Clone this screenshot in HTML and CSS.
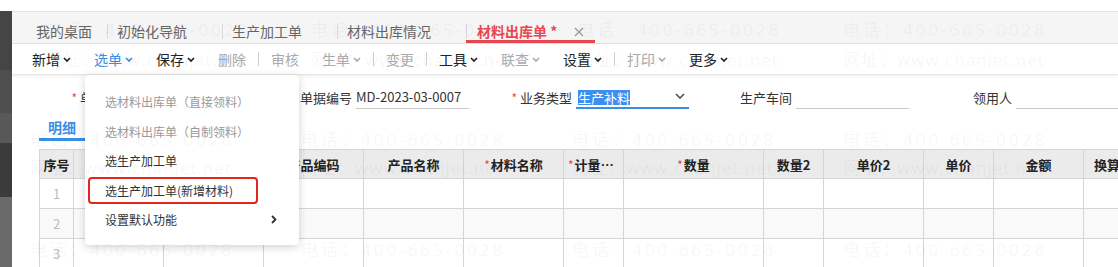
FILE: index.html
```html
<!DOCTYPE html>
<html lang="zh-CN">
<head>
<meta charset="UTF-8">
<title>材料出库单</title>
<link rel="stylesheet" href="styles.css">
</head>
<body>
<div class="app">
    <div class="side"></div>
    <div class="main">
        <div class="tabbar">
            <div class="tab first">我的桌面</div>
            <div class="tab">初始化导航</div>
            <div class="tab">生产加工单</div>
            <div class="tab">材料出库情况</div>
            <div class="tab active">材料出库单 *<svg class="close" width="10" height="10" viewBox="0 0 10 10"><path d="M1 1L9 9M9 1L1 9" stroke="#999" stroke-width="1.3" fill="none"/></svg></div>
        </div>

        <div class="toolbar">
            <span class="tool">新增<svg width="8" height="5" viewBox="0 0 8 5"><path d="M1 1l3 3 3-3" stroke="currentColor" stroke-width="1.7" fill="none"/></svg></span>
            <span class="tool blue has-menu">选单<svg width="8" height="5" viewBox="0 0 8 5"><path d="M1 1l3 3 3-3" stroke="currentColor" stroke-width="1.7" fill="none"/></svg>
                <div class="menu">
                    <div class="menu-item off">选材料出库单（直接领料）</div>
                    <div class="menu-item off">选材料出库单（自制领料）</div>
                    <div class="menu-item">选生产加工单</div>
                    <div class="menu-item"><span class="marked">选生产加工单(新增材料)</span></div>
                    <div class="menu-item sub">设置默认功能<svg width="6" height="9" viewBox="0 0 6 9"><path d="M1 1l3.5 3.5L1 8" stroke="#333" stroke-width="1.8" fill="none"/></svg></div>
                </div>
            </span>
            <span class="tool">保存<svg width="8" height="5" viewBox="0 0 8 5"><path d="M1 1l3 3 3-3" stroke="currentColor" stroke-width="1.7" fill="none"/></svg></span>
            <span class="tool off">删除</span>
            <span class="sep"></span>
            <span class="tool off">审核</span>
            <span class="tool off">生单<svg width="8" height="5" viewBox="0 0 8 5"><path d="M1 1l3 3 3-3" stroke="currentColor" stroke-width="1.7" fill="none"/></svg></span>
            <span class="sep"></span>
            <span class="tool off">变更</span>
            <span class="sep"></span>
            <span class="tool">工具<svg width="8" height="5" viewBox="0 0 8 5"><path d="M1 1l3 3 3-3" stroke="currentColor" stroke-width="1.7" fill="none"/></svg></span>
            <span class="tool off">联查<svg width="8" height="5" viewBox="0 0 8 5"><path d="M1 1l3 3 3-3" stroke="currentColor" stroke-width="1.7" fill="none"/></svg></span>
            <span class="tool">设置<svg width="8" height="5" viewBox="0 0 8 5"><path d="M1 1l3 3 3-3" stroke="currentColor" stroke-width="1.7" fill="none"/></svg></span>
            <span class="sep"></span>
            <span class="tool off">打印<svg width="8" height="5" viewBox="0 0 8 5"><path d="M1 1l3 3 3-3" stroke="currentColor" stroke-width="1.7" fill="none"/></svg></span>
            <span class="tool">更多<svg width="8" height="5" viewBox="0 0 8 5"><path d="M1 1l3 3 3-3" stroke="currentColor" stroke-width="1.7" fill="none"/></svg></span>
        </div>

        <div class="content">
            <div class="form-row">
                <div class="field">
                    <label><span class="req">*</span>单据日期</label>
                    <div class="input">2023-03-15</div>
                </div>
                <div class="field">
                    <label>单据编号</label>
                    <div class="input">MD-2023-03-0007</div>
                </div>
                <div class="field">
                    <label><span class="req">*</span>业务类型</label>
                    <div class="input select"><span class="picked">生产补料</span><svg width="10" height="6" viewBox="0 0 10 6"><path d="M1 1l4 4 4-4" stroke="#555" stroke-width="1.7" fill="none"/></svg></div>
                </div>
                <div class="field">
                    <label>生产车间</label>
                    <div class="input"></div>
                </div>
                <div class="field">
                    <label>领用人</label>
                    <div class="input"></div>
                </div>
            </div>

            <div class="subtabs">
                <span class="subtab">明细</span>
            </div>

            <div class="grid-wrap">
                <table class="grid">
                    <colgroup>
                        <col style="width:34px"><col style="width:90px"><col style="width:100px">
                        <col style="width:100px"><col style="width:100px"><col style="width:100px">
                        <col style="width:60px"><col style="width:140px"><col style="width:60px">
                        <col style="width:100px"><col style="width:70px"><col style="width:90px">
                        <col style="width:60px">
                    </colgroup>
                    <thead>
                        <tr>
                            <th class="num">序号</th>
                            <th>源单编号</th>
                            <th>源单行号</th>
                            <th>产品编码</th>
                            <th>产品名称</th>
                            <th><span class="req">*</span>材料名称</th>
                            <th><span class="req">*</span>计量单位</th>
                            <th><span class="req">*</span>数量</th>
                            <th>数量2</th>
                            <th>单价2</th>
                            <th>单价</th>
                            <th>金额</th>
                            <th>换算率</th>
                        </tr>
                    </thead>
                    <tbody>
                        <tr><td class="num">1</td><td></td><td></td><td></td><td></td><td></td><td></td><td></td><td></td><td></td><td></td><td></td><td></td></tr>
                        <tr class="odd"><td class="num">2</td><td></td><td></td><td></td><td></td><td></td><td></td><td></td><td></td><td></td><td></td><td></td><td></td></tr>
                        <tr><td class="num">3</td><td></td><td></td><td></td><td></td><td></td><td></td><td></td><td></td><td></td><td></td><td></td><td></td></tr>
                    </tbody>
                </table>
            </div>
        </div>
    </div>
</div>

<!-- watermark of the host app, drawn over everything -->
<div class="wm wm-head">
    <div class="wm-cell"><p class="tel">电话：400-665-0028</p><p class="web">网址：www.chanjet.net</p></div>
    <div class="wm-cell"><p class="tel">电话：400-665-0028</p><p class="web">网址：www.chanjet.net</p></div>
    <div class="wm-cell"><p class="tel">电话：400-665-0028</p><p class="web">网址：www.chanjet.net</p></div>
    <div class="wm-cell"><p class="tel">电话：400-665-0028</p><p class="web">网址：www.chanjet.net</p></div>
</div>
<div class="wm wm-body">
    <div class="wm-cell"><p class="tel">电话：400-665-0028</p><p class="web">网址：www.chanjet.net</p></div>
    <div class="wm-cell"><p class="tel">电话：400-665-0028</p><p class="web">网址：www.chanjet.net</p></div>
    <div class="wm-cell"><p class="tel">电话：400-665-0028</p><p class="web">网址：www.chanjet.net</p></div>
    <div class="wm-cell"><p class="tel">电话：400-665-0028</p><p class="web">网址：www.chanjet.net</p></div>
    <div class="wm-cell"><p class="tel">电话：400-665-0028</p><p class="web">网址：www.chanjet.net</p></div>
    <div class="wm-cell"><p class="tel">电话：400-665-0028</p><p class="web">网址：www.chanjet.net</p></div>
    <div class="wm-cell"><p class="tel">电话：400-665-0028</p><p class="web">网址：www.chanjet.net</p></div>
    <div class="wm-cell"><p class="tel">电话：400-665-0028</p><p class="web">网址：www.chanjet.net</p></div>
</div>
</body>
</html>
```

FILE: styles.css
```css
html, body{
    margin: 0;
    height: 267px;
    overflow: hidden;
}
body{
    position: relative;
    font-family: "Noto Sans CJK SC", "Noto Sans", sans-serif;
    font-size: 13px;
    color: #333;
    background-color: #fff;
}
.app{
    display: flex;
    padding-top: 11px;
    height: 256px;
}
.side{
    flex: none;
    width: 12px;
    background: linear-gradient(to bottom,
        #454545 0, #454545 59px,
        #4e4e4e 59px, #4e4e4e 102px,
        #585858 102px, #585858 132px,
        #3b3b3b 132px, #3b3b3b 186px,
        #6a6a6a 186px);
}
.main{
    flex: 1;
    min-width: 0;
}

/* tab strip */
.tabbar{
    display: flex;
    height: 33px;
    box-sizing: border-box;
    border-top: 1px solid #e2e2e2;
    border-bottom: 1px solid #e4e4e4;
    background-color: #f5f5f5;
}
.tab{
    height: 31px;
    box-sizing: border-box;
    padding: 9px 35px 0 10px;
    line-height: 20px;
    font-size: 14px;
    color: #666;
    white-space: nowrap;
    background: linear-gradient(#d9d9d9, #d9d9d9) 0 12px / 1px 15px no-repeat;
}
.tab.first{
    margin-left: 14px;
    padding-right: 15px;
    background: none;
}
.tab.active{
    display: flex;
    align-items: flex-start;
    padding: 9px 11px 0 11px;
    color: #e8474f;
    font-weight: bold;
    border-bottom: 3px solid #e8474f;
}
.close{
    margin: 6px 0 0 17px;
}

/* toolbar */
.toolbar{
    position: relative;
    z-index: 2;
    display: flex;
    align-items: center;
    height: 30px;
    padding-left: 20px;
    border-bottom: 1px solid #e6e6e6;
    box-shadow: 0 1px 3px rgba(0, 0, 0, 0.08);
    background-color: #fff;
}
.tool{
    display: flex;
    align-items: center;
    height: 30px;
    margin-right: 23px;
    font-size: 14px;
    color: #222;
    white-space: nowrap;
}
.tool svg{
    margin-left: 3px;
}
.tool.off{
    color: #aaa;
}
.tool.blue{
    color: #3a8ee6;
}
.sep{
    width: 1px;
    height: 14px;
    margin: 0 12px 0 -11px;
    background-color: #cfcfcf;
}

/* 选单 dropdown */
.has-menu{
    position: relative;
}
.menu{
    position: absolute;
    top: 31px;
    left: -9px;
    width: 214px;
    height: 170px;
    box-sizing: border-box;
    padding: 12px 0 10px;
    background-color: #fff;
    border-radius: 4px;
    box-shadow: 0 2px 8px rgba(0, 0, 0, 0.18);
}
.menu-item{
    display: flex;
    align-items: center;
    height: 29.5px;
    padding: 0 22px 0 20px;
    font-size: 12px;
    color: #333;
}
.menu-item.off{
    color: #999;
}
.menu-item.sub{
    justify-content: space-between;
}
.marked{
    display: inline-block;
    height: 27px;
    box-sizing: border-box;
    line-height: 23px;
    margin-left: -17px;
    padding: 0 23px 0 15px;
    border: 2px solid #e2261c;
    border-radius: 4px;
}

/* head form */
.content{
    padding-left: 20px;
}
.form-row{
    display: flex;
    align-items: center;
    height: 30px;
    margin-top: 7px;
    white-space: nowrap;
}
.field{
    flex: none;
    display: flex;
    align-items: center;
    width: 220px;
}
.field label{
    width: 100px;
    margin-right: 4px;
    text-align: right;
    color: #333;
}
.req{
    margin-right: 3px;
    font-size: 12px;
    color: #e8474f;
}
.input{
    width: 113px;
    height: 24px;
    box-sizing: border-box;
    line-height: 23px;
    border-bottom: 1px solid #c9c9c9;
    color: #333;
    overflow: hidden;
}
.select{
    display: flex;
    align-items: center;
    justify-content: space-between;
    padding: 0 4px 0 2px;
    border-bottom: 2px solid #3a8ee6;
}
.picked{
    line-height: 15px;
    margin-top: 3px;
    color: #fff;
    background-color: #3b8ff0;
}

/* detail tab */
.subtabs{
    height: 29px;
    margin-left: 7px;
}
.subtab{
    display: inline-block;
    width: 46px;
    padding-top: 4px;
    line-height: 22px;
    text-align: center;
    font-size: 14px;
    font-weight: bold;
    color: #3a8ee6;
    border-bottom: 3px solid #3a8ee6;
}

/* grid */
.grid-wrap{
    margin: 8px 0 0 7px;
    overflow: hidden;
}
.grid{
    width: 1104px;
    table-layout: fixed;
    border-collapse: collapse;
}
.grid th, .grid td{
    padding: 0 4px;
    border: 1px solid #d5d5d5;
    white-space: nowrap;
    overflow: hidden;
    text-overflow: ellipsis;
    text-align: center;
}
.grid th{
    height: 28px;
    font-size: 13px;
    font-weight: bold;
    color: #222;
    background-color: #ebebeb;
}
.grid th .req{
    margin-right: 1px;
    font-weight: normal;
}
.grid td{
    height: 29px;
    background-color: #fff;
}
.grid tr.odd td{
    background-color: #f9f9f9;
}
.grid th.num, .grid td.num{
    padding: 0;
    text-overflow: clip;
}
.grid td.num{
    color: #bbb;
}

/* watermark */
.wm{
    position: absolute;
    z-index: 10;
    pointer-events: none;
    font-family: "Open Sans", "Noto Sans CJK SC", sans-serif;
    font-size: 17px;
    color: rgba(0, 0, 0, 0.05);
    white-space: nowrap;
}
.wm p{
    margin: 0;
}
.wm .tel{
    letter-spacing: 3px;
}
.wm .web{
    letter-spacing: 1px;
}
.wm-head{
    top: 15px;
    left: 45px;
    display: flex;
    line-height: 30px;
}
.wm-head .wm-cell{
    width: 266px;
}
.wm-body{
    top: 126px;
    left: 30px;
    display: grid;
    grid-template-columns: repeat(4, 271px);
    grid-auto-rows: 110px;
    line-height: 28px;
}
```
